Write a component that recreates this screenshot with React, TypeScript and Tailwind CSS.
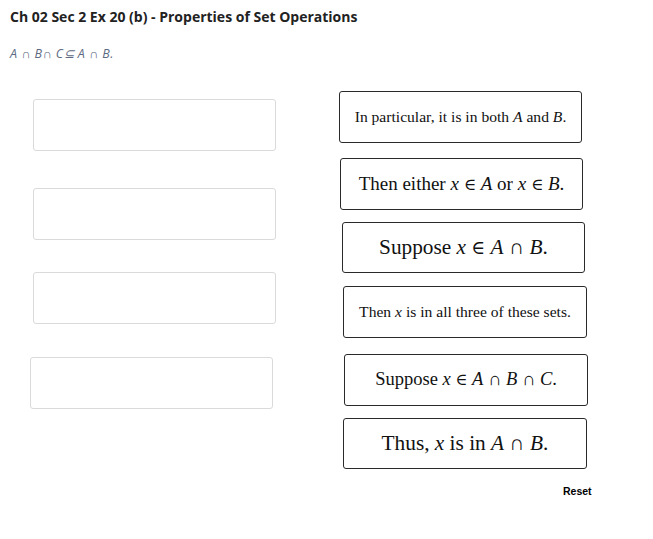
const I = ({ children }: { children: React.ReactNode }) => <i className="italic">{children}</i>;

// set-membership sign, drawn a bit smaller than the serif's own glyph
const In = () => <span className="font-['DejaVu_Serif',serif] text-[0.88em]">∈</span>;

const leftSlots = [
  "mt-[28px] ml-[33px]",
  "mt-[37px] ml-[33px]",
  "mt-[32px] ml-[33px]",
  "mt-[33px] ml-[30px]",
];

const cards = [
  {
    cls: "mt-[20px] ml-[339px] w-[243px] h-[52px] text-[15.6px]",
    body: (
      <>
        In particular, it is in both <I>A</I> and <I>B</I>.
      </>
    ),
  },
  {
    cls: "mt-[15px] ml-[340px] w-[243px] h-[52px] text-[19px]",
    body: (
      <>
        Then either <I>x</I> <In /> <I>A</I> or <I>x</I> <In /> <I>B</I>.
      </>
    ),
  },
  {
    cls: "mt-[12px] ml-[342px] w-[243px] h-[51px] text-[21.3px]",
    body: (
      <>
        Suppose <I>x</I> <In /> <I>A</I> ∩ <I>B</I>.
      </>
    ),
  },
  {
    cls: "mt-[13px] ml-[343px] w-[244px] h-[52px] text-[15.6px]",
    body: (
      <>
        Then <I>x</I> is in all three of these sets.
      </>
    ),
  },
  {
    cls: "mt-[16px] ml-[344px] w-[244px] h-[52px] text-[18.5px]",
    body: (
      <>
        Suppose <I>x</I> <In /> <I>A</I> ∩ <I>B</I> ∩ <I>C</I>.
      </>
    ),
  },
  {
    cls: "mt-[12px] ml-[343px] w-[244px] h-[51px] text-[21.3px]",
    body: (
      <>
        Thus, <I>x</I> is in <I>A</I> ∩ <I>B</I>.
      </>
    ),
  },
];

export default function App() {
  return (
    <div className="min-h-[539px] w-[653px] bg-white text-black">
      {/* Header */}
      <div className="h-[71px] px-[10px] pt-[8px]">
        <h1 className="font-['Open_Sans',sans-serif] text-[14px] font-bold leading-[18px] text-[#222]">
          Ch 02 Sec 2 Ex 20 (b) - Properties of Set Operations
        </h1>
        <p className="mt-[21px] font-['Open_Sans',sans-serif] text-[12.5px] italic leading-[14px] tracking-[0.5px] text-[#5d6b82]">
          A ∩ B∩ C⊆ A ∩ B.
        </p>
      </div>

      {/* Drag & drop area */}
      <div className="flex">
        {/* Drop slots */}
        <div className="flex w-0 flex-col">
          {leftSlots.map((cls, i) => (
            <div
              key={i}
              className={`${cls} h-[52px] w-[243px] shrink-0 rounded-[3px] border border-[#dadada] bg-white`}
            />
          ))}
        </div>

        {/* Statement cards */}
        <div className="flex flex-col">
          {cards.map((c, i) => (
            <div
              key={i}
              className={`${c.cls} flex shrink-0 items-center justify-center rounded-[3px] border border-[#2a2a2a] bg-white font-['Liberation_Serif',serif] text-[#111]`}
            >
              <span className="whitespace-nowrap">{c.body}</span>
            </div>
          ))}
          <div className="mt-[15px] ml-[563px] font-['Liberation_Sans',sans-serif] text-[10.5px] font-bold leading-[14px]">
            Reset
          </div>
        </div>
      </div>
    </div>
  );
}
